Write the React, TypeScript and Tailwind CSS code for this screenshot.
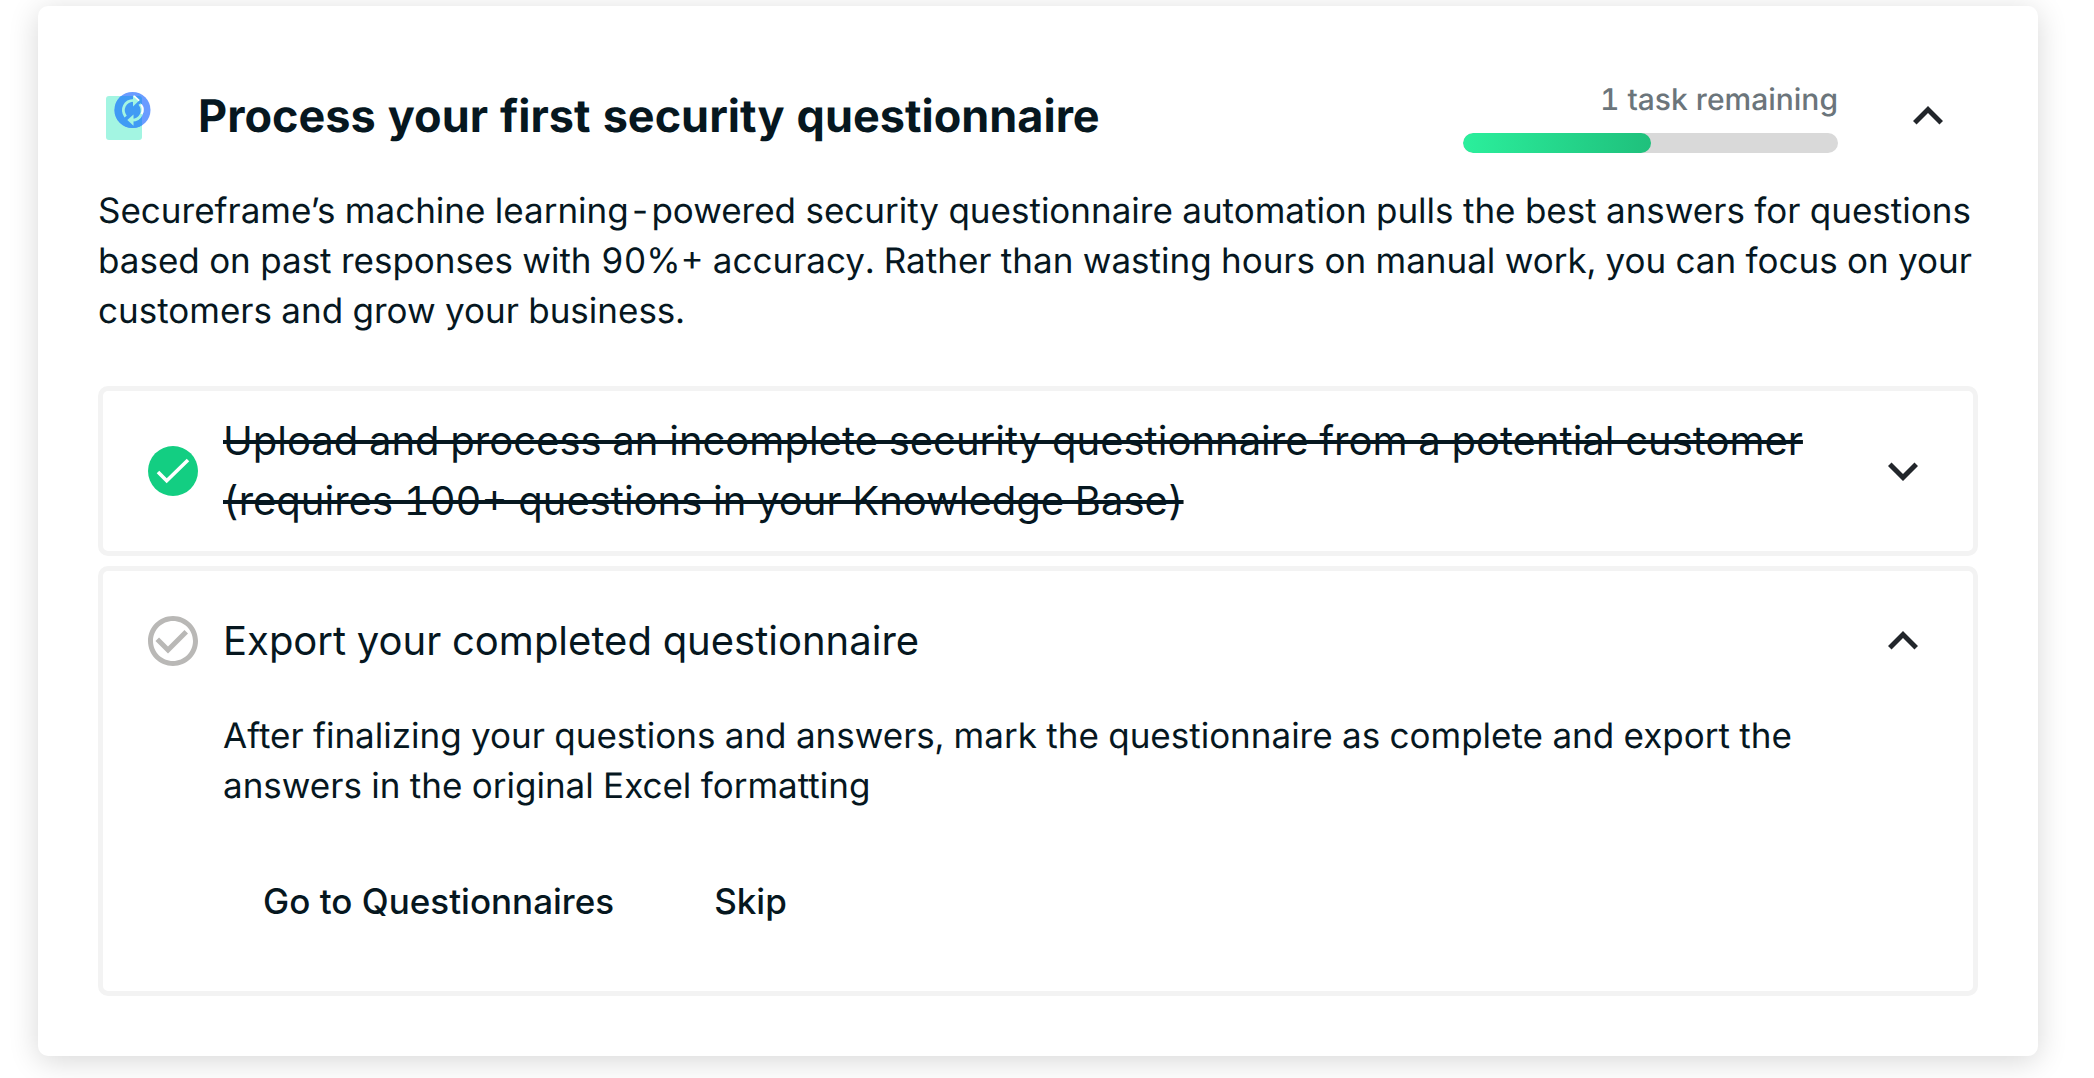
import { useState } from "react";

const tasks = [
  {
    id: "upload",
    title:
      "Upload and process an incomplete security questionnaire from a potential customer (requires 100+ questions in your Knowledge Base)",
    description: "",
    done: true,
  },
  {
    id: "export",
    title: "Export your completed questionnaire",
    description:
      "After finalizing your questions and answers, mark the questionnaire as complete and export the answers in the original Excel formatting",
    done: false,
  },
];

function Chevron({ open }: { open: boolean }) {
  return (
    <svg viewBox="0 0 24 24" className="size-[60px] shrink-0" fill="#22262b" aria-hidden="true">
      {open ? (
        <path d="M12 8l-6 6 1.41 1.41L12 10.83l4.59 4.58L18 14z" />
      ) : (
        <path d="M16.59 8.59L12 13.17 7.41 8.59 6 10l6 6 6-6z" />
      )}
    </svg>
  );
}

function StatusIcon({ done }: { done: boolean }) {
  if (done) {
    return (
      <svg viewBox="0 0 60 60" className="size-[60px] shrink-0" fill="none" aria-hidden="true">
        <circle cx="30" cy="30" r="25" fill="#13ce82" />
        <path d="M15 31l8.7 8.7L45 19" stroke="#fff" strokeWidth="3.6" />
      </svg>
    );
  }
  return (
    <svg viewBox="0 0 24 24" className="size-[60px] shrink-0" fill="#b9b8b6" aria-hidden="true">
      <path d="M16.59 7.58L10 14.17l-3.59-3.58L5 12l5 5 8-8zM12 2C6.48 2 2 6.48 2 12s4.48 10 10 10 10-4.48 10-10S17.52 2 12 2zm0 18c-4.42 0-8-3.58-8-8s3.58-8 8-8 8 3.58 8 8-3.58 8-8 8z" />
    </svg>
  );
}

function QuestionnaireIcon() {
  return (
    <svg viewBox="0 0 60 60" className="size-[60px] shrink-0" fill="none" aria-hidden="true">
      <defs>
        <clipPath id="doc">
          <rect x="8" y="10" width="36" height="44" rx="3" />
        </clipPath>
      </defs>
      <rect x="8" y="10" width="36" height="44" rx="3" fill="#a3f5e2" />
      <circle cx="34.5" cy="24" r="18" fill="#6a9cff" />
      <circle cx="34.5" cy="24" r="18" fill="#409bf4" clipPath="url(#doc)" />
      {/* arrows are white, tinted where they sit over the page */}
      <path d="M27.6 30.6C22.6 23.5 26.5 14.5 36 14.4" stroke="#a3f5e2" strokeWidth="2.8" />
      <path d="M35 9l6.2 5.6L35 20.5z" fill="#a3f5e2" />
      <path d="M36 9.8l5.2 4.8" stroke="#fff" strokeWidth="1.6" />
      <path d="M41.6 18C47 25 43 33.8 34 34.2" stroke="#a3f5e2" strokeWidth="2.8" />
      <path d="M43 18.5C45.2 21.5 45.2 25 43.6 28" stroke="#fff" strokeWidth="2" />
      <path d="M35.5 28.5l-6.2 5.6 6.2 5.6z" fill="#a3f5e2" />
    </svg>
  );
}

function TaskItem({ task }: { task: (typeof tasks)[number] }) {
  const [open, setOpen] = useState(!task.done);

  return (
    <li className="rounded-[10px] border-5 border-[#f3f3f3]">
      <button
        type="button"
        aria-expanded={open}
        onClick={() => setOpen(!open)}
        className="flex w-full items-center gap-5 px-10 py-5 text-left"
      >
        <StatusIcon done={task.done} />
        <span className="flex min-h-[100px] flex-1 items-center text-[40px] leading-[60px]">
          <span className={task.done ? "line-through decoration-4" : ""}>{task.title}</span>
        </span>
        <Chevron open={open} />
      </button>
      {open && task.description && (
        <div className="pr-[140px] pb-[50px] pl-[120px]">
          <p className="text-[35px] leading-[50px]">{task.description}</p>
          <div className="mt-[50px] flex gap-5">
            <button type="button" className="h-20 px-10 text-[35px] font-medium">
              Go to Questionnaires
            </button>
            <button type="button" className="h-20 px-10 text-[35px] font-medium">
              Skip
            </button>
          </div>
        </div>
      )}
    </li>
  );
}

export default function App() {
  const [open, setOpen] = useState(true);
  const remaining = tasks.filter((task) => !task.done).length;
  const progress = ((tasks.length - remaining) / tasks.length) * 100;

  return (
    <div className="overflow-hidden bg-white pt-[6px] pr-14 pb-[22px] pl-[38px] font-['Inter',sans-serif] text-[#06171f] tabular-nums [text-rendering:geometricPrecision]">
      <section className="rounded-[10px] bg-white p-[60px] shadow-[0_5px_30px_rgba(0,0,0,0.16)]">
        <header className="flex h-[100px] items-center gap-10 pr-5">
          <QuestionnaireIcon />
          <h1 className="flex-1 text-[45px] leading-[60px] font-bold">
            Process your first security questionnaire
          </h1>
          <div className="mr-5 w-[375px] pb-1">
            <p id="remaining" className="text-right text-[30px] leading-[50px] font-medium text-[#6b757b]">
              {remaining} task remaining
            </p>
            <div
              role="progressbar"
              aria-labelledby="remaining"
              aria-valuenow={progress}
              className="mt-2 h-5 overflow-hidden rounded-full bg-[#d9d9d9]"
            >
              <div
                className="h-full rounded-full bg-linear-to-r from-[#2bef9c] to-[#1fc07c]"
                style={{ width: `${progress}%` }}
              />
            </div>
          </div>
          <button type="button" aria-label="Toggle tasks" aria-expanded={open} onClick={() => setOpen(!open)}>
            <Chevron open={open} />
          </button>
        </header>

        <p className="mt-5 -mr-5 text-[35px] leading-[50px]">
          Secureframe’s machine learning-powered security questionnaire automation pulls the best answers for
          questions based on past responses with 90%+ accuracy. Rather than wasting hours on manual work, you can
          focus on your customers and grow your business.
        </p>

        {open && (
          <ul className="mt-[50px] flex flex-col gap-[10px]">
            {tasks.map((task) => (
              <TaskItem key={task.id} task={task} />
            ))}
          </ul>
        )}
      </section>
    </div>
  );
}
